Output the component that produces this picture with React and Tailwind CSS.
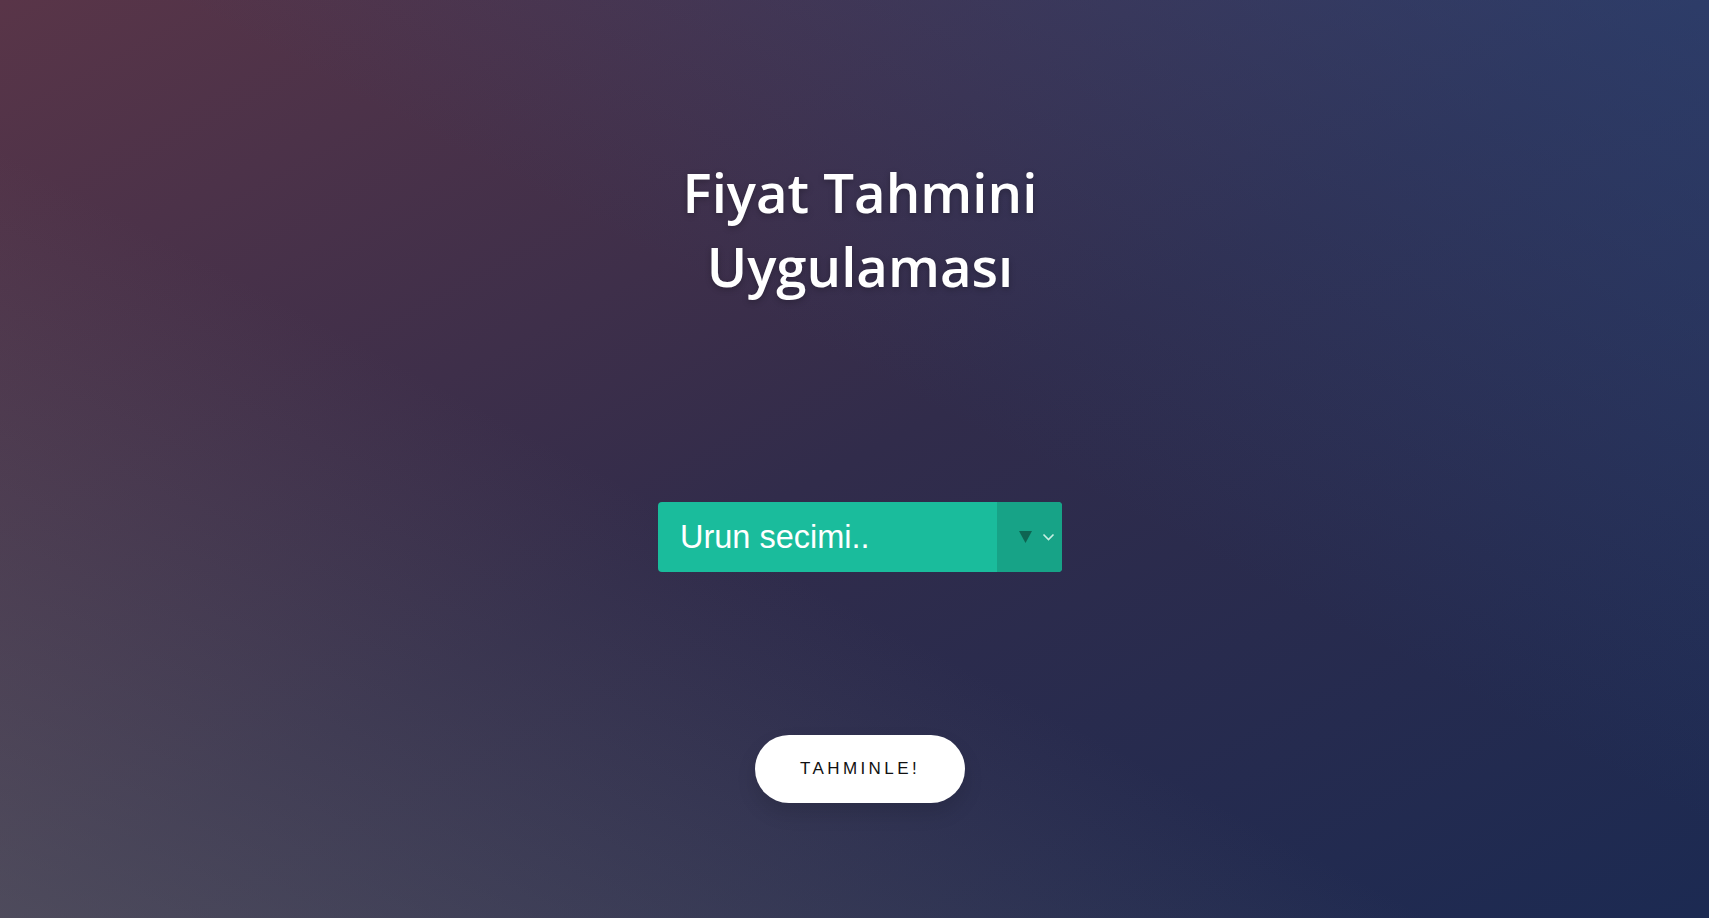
import React from "react";

export default function App() {
  return (
    <div className="relative min-h-screen w-full overflow-hidden bg-[linear-gradient(to_top_right,rgba(125,125,120,0.38)_0%,rgba(120,120,110,0)_42%,rgba(40,80,140,0)_55%,rgba(40,80,140,0.45)_100%),linear-gradient(to_bottom_right,#593548_0%,#312c4b_50%,#1c2a52_100%)]">
      <div className="flex flex-col items-center pl-[11px] pt-[155px]">
        <h1 className="text-center font-['Open_Sans',sans-serif] text-[54.5px] font-semibold leading-[74px] text-white [text-shadow:0_2px_6px_rgba(0,0,0,0.25)]">
          Fiyat Tahmini
          <br />
          Uygulaması
        </h1>

        <div className="mt-[199px] flex h-[70px] w-[404px] overflow-hidden rounded-[4px] bg-[#1abc9c]">
          <div className="flex flex-1 items-center pl-[22px] font-['Liberation_Sans',Arial,sans-serif] text-[32.5px] text-white">
            Urun secimi..
          </div>
          <div className="flex w-[65px] items-center gap-[10px] bg-[#17a387] pl-[22px]">
            <svg width="13" height="12" viewBox="0 0 13 12">
              <path d="M0 0 H13 L6.5 12 Z" fill="#0e6552" />
            </svg>
            <svg width="13" height="8" viewBox="0 0 13 8">
              <path d="M1.5 1.5 L6.5 6.5 L11.5 1.5" fill="none" stroke="#c9efe3" strokeWidth="1.6" />
            </svg>
          </div>
        </div>

        <button className="mt-[163px] flex h-[68px] w-[210px] items-center justify-center rounded-full bg-white font-['Liberation_Sans',Arial,sans-serif] text-[17px] tracking-[3.4px] text-[#111] shadow-[0_10px_20px_rgba(0,0,0,0.12)]">
          TAHMINLE!
        </button>
      </div>
    </div>
  );
}
